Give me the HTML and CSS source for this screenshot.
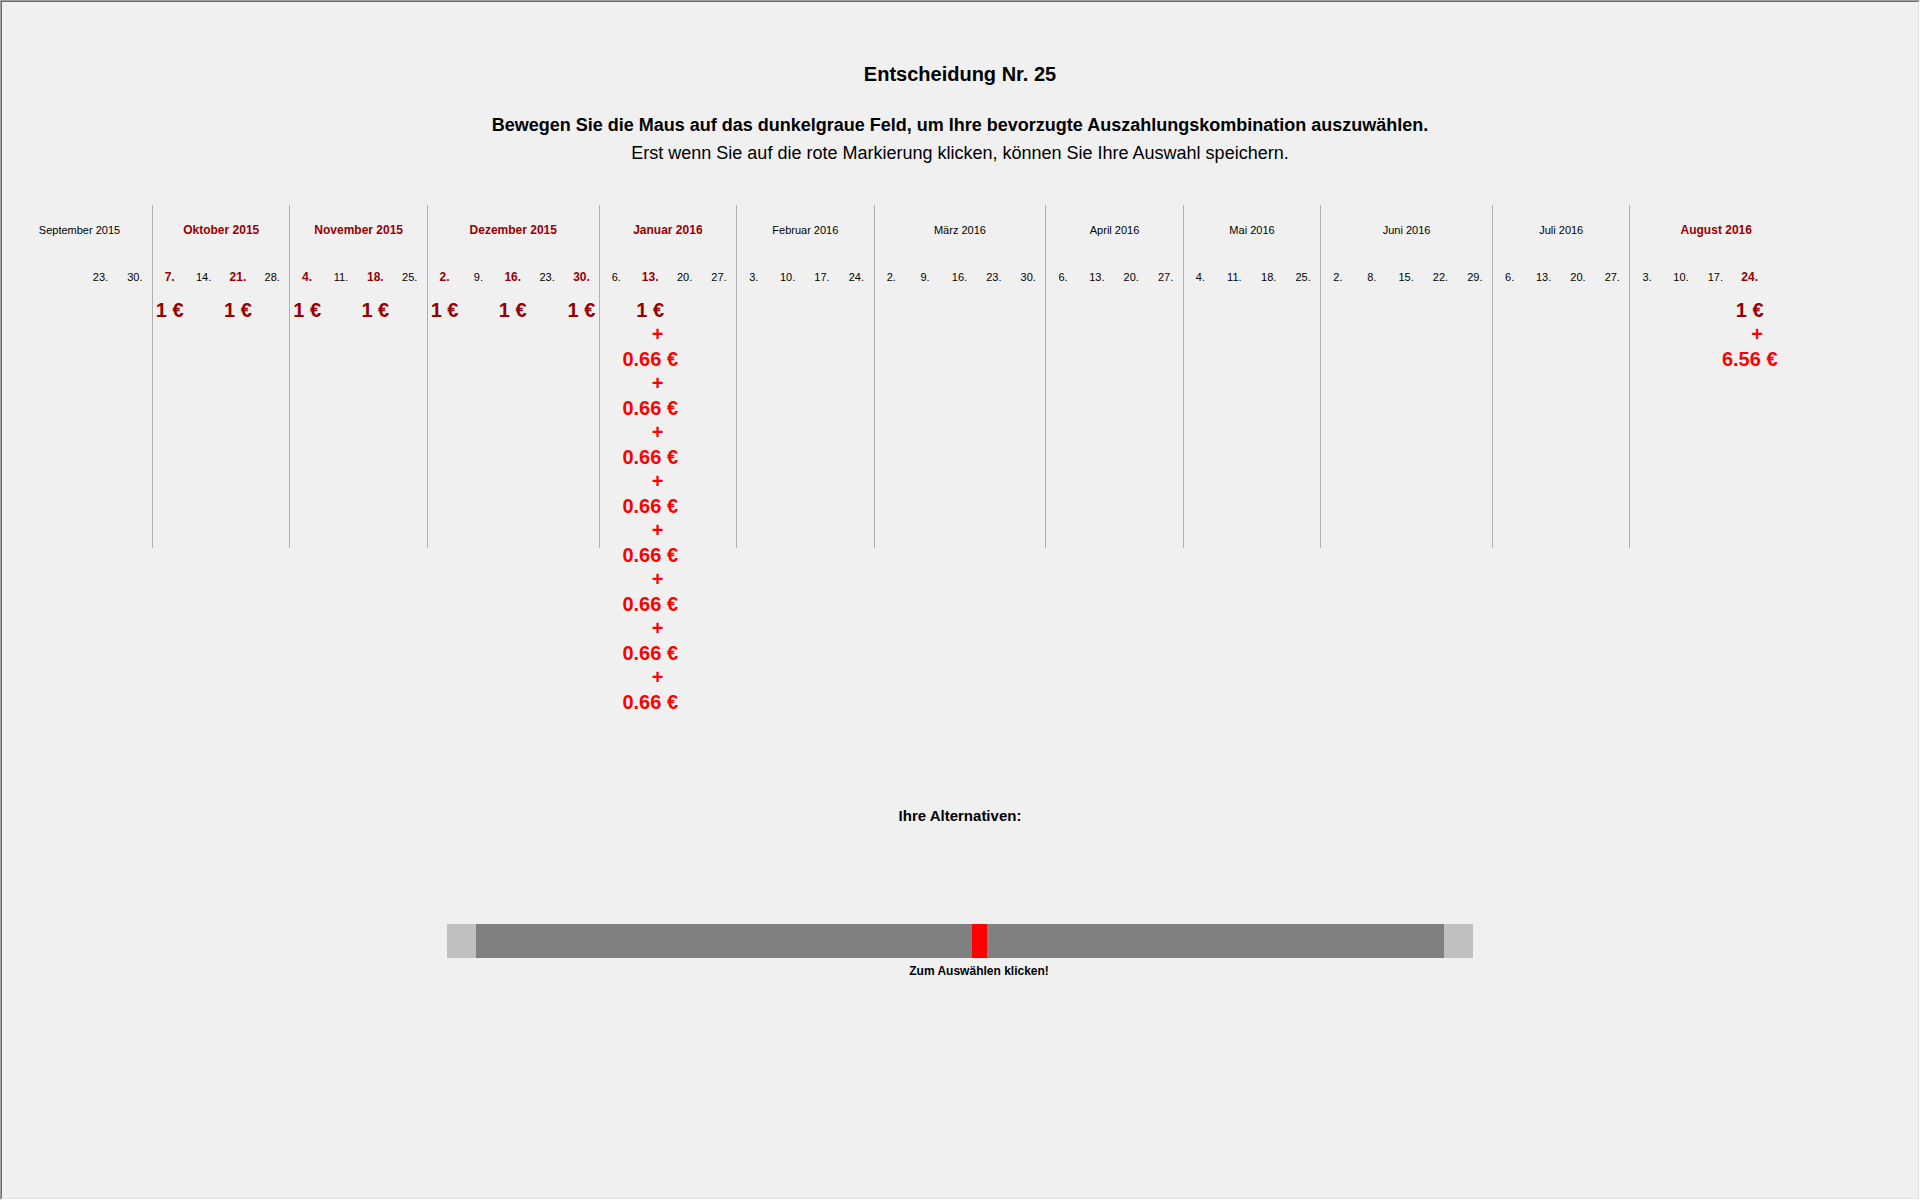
FILE: index.html
```html
<!DOCTYPE html>
<html lang="de">
<head>
<meta charset="utf-8">
<title>Entscheidung Nr. 25</title>
<link rel="stylesheet" href="styles.css">
</head>
<body>
<main class="screen">
  <header class="intro">
    <h1 class="title">Entscheidung Nr. 25</h1>
    <p class="lead">Bewegen Sie die Maus auf das dunkelgraue Feld, um Ihre bevorzugte Auszahlungskombination auszuwählen.</p>
    <p class="note">Erst wenn Sie auf die rote Markierung klicken, können Sie Ihre Auswahl speichern.</p>
  </header>

  <div class="schedule">
    <table class="calendar">
      <colgroup><col class="offset"><col span="50"></colgroup>
      <thead>
        <tr class="months" id="months"></tr>
        <tr class="days" id="days"></tr>
      </thead>
      <tbody>
        <tr class="payouts" id="payouts"></tr>
      </tbody>
    </table>
  </div>

  <section class="choice">
    <label class="choice-label" for="choice">Ihre Alternativen:</label>
    <div class="bar">
      <input class="slider" id="choice" type="range" min="0" max="100" value="52">
    </div>
    <div class="hint-row">
      <output class="hint" for="choice">Zum Auswählen klicken!</output>
    </div>
  </section>
</main>
<script src="calendar.js"></script>
</body>
</html>
```
FILE: calendar.js
```js
// Payment dates per month; a null day is an empty week column.
const months = [
  { name: "September 2015", days: [null, 23, 30] },
  { name: "Oktober 2015", days: [7, 14, 21, 28] },
  { name: "November 2015", days: [4, 11, 18, 25] },
  { name: "Dezember 2015", days: [2, 9, 16, 23, 30] },
  { name: "Januar 2016", days: [6, 13, 20, 27] },
  { name: "Februar 2016", days: [3, 10, 17, 24] },
  { name: "März 2016", days: [2, 9, 16, 23, 30] },
  { name: "April 2016", days: [6, 13, 20, 27] },
  { name: "Mai 2016", days: [4, 11, 18, 25] },
  { name: "Juni 2016", days: [2, 8, 15, 22, 29] },
  { name: "Juli 2016", days: [6, 13, 20, 27] },
  { name: "August 2016", days: [3, 10, 17, 24, null] }
];

// Extra amounts on top of the fixed 1 €, keyed by month index and day.
const payouts = {
  "1-7": [], "1-21": [],
  "2-4": [], "2-18": [],
  "3-2": [], "3-16": [], "3-30": [],
  "4-13": Array(8).fill("0.66 €"),
  "11-24": ["6.56 €"]
};

function cell(tag, text, classes) {
  const el = document.createElement(tag);
  el.className = classes.filter(Boolean).join(" ");
  el.textContent = text;
  return el;
}

const monthRow = document.getElementById("months");
const dayRow = document.getElementById("days");
const payoutRow = document.getElementById("payouts");

months.forEach((month, m) => {
  const paid = month.days.some(day => payouts[`${m}-${day}`]);
  const head = cell("th", month.name, [m && "divider", paid && "paid"]);
  head.colSpan = month.days.length;
  head.scope = "colgroup";
  monthRow.append(head);

  month.days.forEach((day, d) => {
    const extras = payouts[`${m}-${day}`];
    const divider = m && d === 0 && "divider";
    dayRow.append(cell(day ? "th" : "td", day ? `${day}.` : "", [divider, extras && "paid"]));

    const payout = cell("td", "", [divider]);
    if (extras) {
      const stack = cell("div", "", ["stack"]);
      stack.append(cell("span", "1 €", ["base"]));
      extras.forEach(amount => {
        stack.append(cell("span", "+", ["plus"]), cell("span", amount, ["extra"]));
      });
      payout.append(stack);
    }
    payoutRow.append(payout);
  });
});
```
FILE: styles.css
```css
* {
  box-sizing: border-box;
}

body {
  margin: 0;
  background: #f0f0f0;
  color: #000;
  font-family: "Liberation Sans", Arial, sans-serif;
  border: 1px solid;
  border-color: #a0a0a0 #fff #fff #a0a0a0;
}

.screen {
  min-height: calc(100vh - 2px);
  padding-top: 60px;
  border: 1px solid;
  border-color: #696969 #e3e3e3 #e3e3e3 #696969;
}

.intro {
  text-align: center;
}

.title {
  margin: 0 0 25px;
  font-size: 20px;
  line-height: 24px;
}

.lead,
.note {
  margin: 0;
  font-size: 18px;
  line-height: 28px;
}

.lead {
  font-weight: bold;
}

.schedule {
  padding: 38px 116px 0 5px;
}

.calendar {
  width: 100%;
  table-layout: fixed;
  border-collapse: separate;
  border-spacing: 0;
}

.offset {
  width: 4.25%;
}

.calendar th,
.calendar td {
  padding: 0;
  text-align: center;
  white-space: nowrap;
}

.calendar th {
  padding: 17px 0 13px;
  font-size: 11px;
  line-height: 16px;
  font-weight: normal;
  vertical-align: baseline;
}

.calendar .months th {
  padding-bottom: 14px;
}

.calendar .paid {
  color: #960000;
  font-size: 12px;
  font-weight: bold;
}

.calendar .divider {
  border-left: 1px solid #b0b0b0;
}

.payouts td {
  height: 250px;
  vertical-align: top;
}

/* Long payout lists run on below the month dividers. */
.stack {
  height: 240px;
  display: flex;
  flex-direction: column;
  align-items: center;
  font-size: 20px;
  font-weight: bold;
  line-height: 24px;
}

.base {
  color: #960000;
}

.plus,
.extra {
  color: #f00;
}

.plus {
  padding-left: 15px;
  line-height: 25px;
}

.choice {
  width: 53.5%;
  margin: 258px auto 0;
}

.choice-label {
  display: block;
  margin-bottom: 98px;
  text-align: center;
  font-size: 15px;
  font-weight: bold;
  line-height: 20px;
}

.bar {
  display: flex;
  padding: 0 29px;
  background: #c0c0c0;
}

.slider {
  appearance: none;
  flex: 1;
  min-width: 0;
  height: 34px;
  margin: 0;
  background: #808080;
  cursor: pointer;
}

.slider::-webkit-slider-thumb {
  appearance: none;
  width: 15px;
  height: 34px;
  background: #f00;
}

.slider::-moz-range-thumb {
  width: 15px;
  height: 34px;
  border: 0;
  border-radius: 0;
  background: #f00;
}

/* The middle track sits under the slider thumb. */
.hint-row {
  display: grid;
  grid-template-columns: 52fr 15px 48fr;
  padding: 5px 29px 0;
}

.hint {
  grid-column: 2;
  justify-self: center;
  white-space: nowrap;
  font-size: 12px;
  font-weight: bold;
  line-height: 16px;
}
```
